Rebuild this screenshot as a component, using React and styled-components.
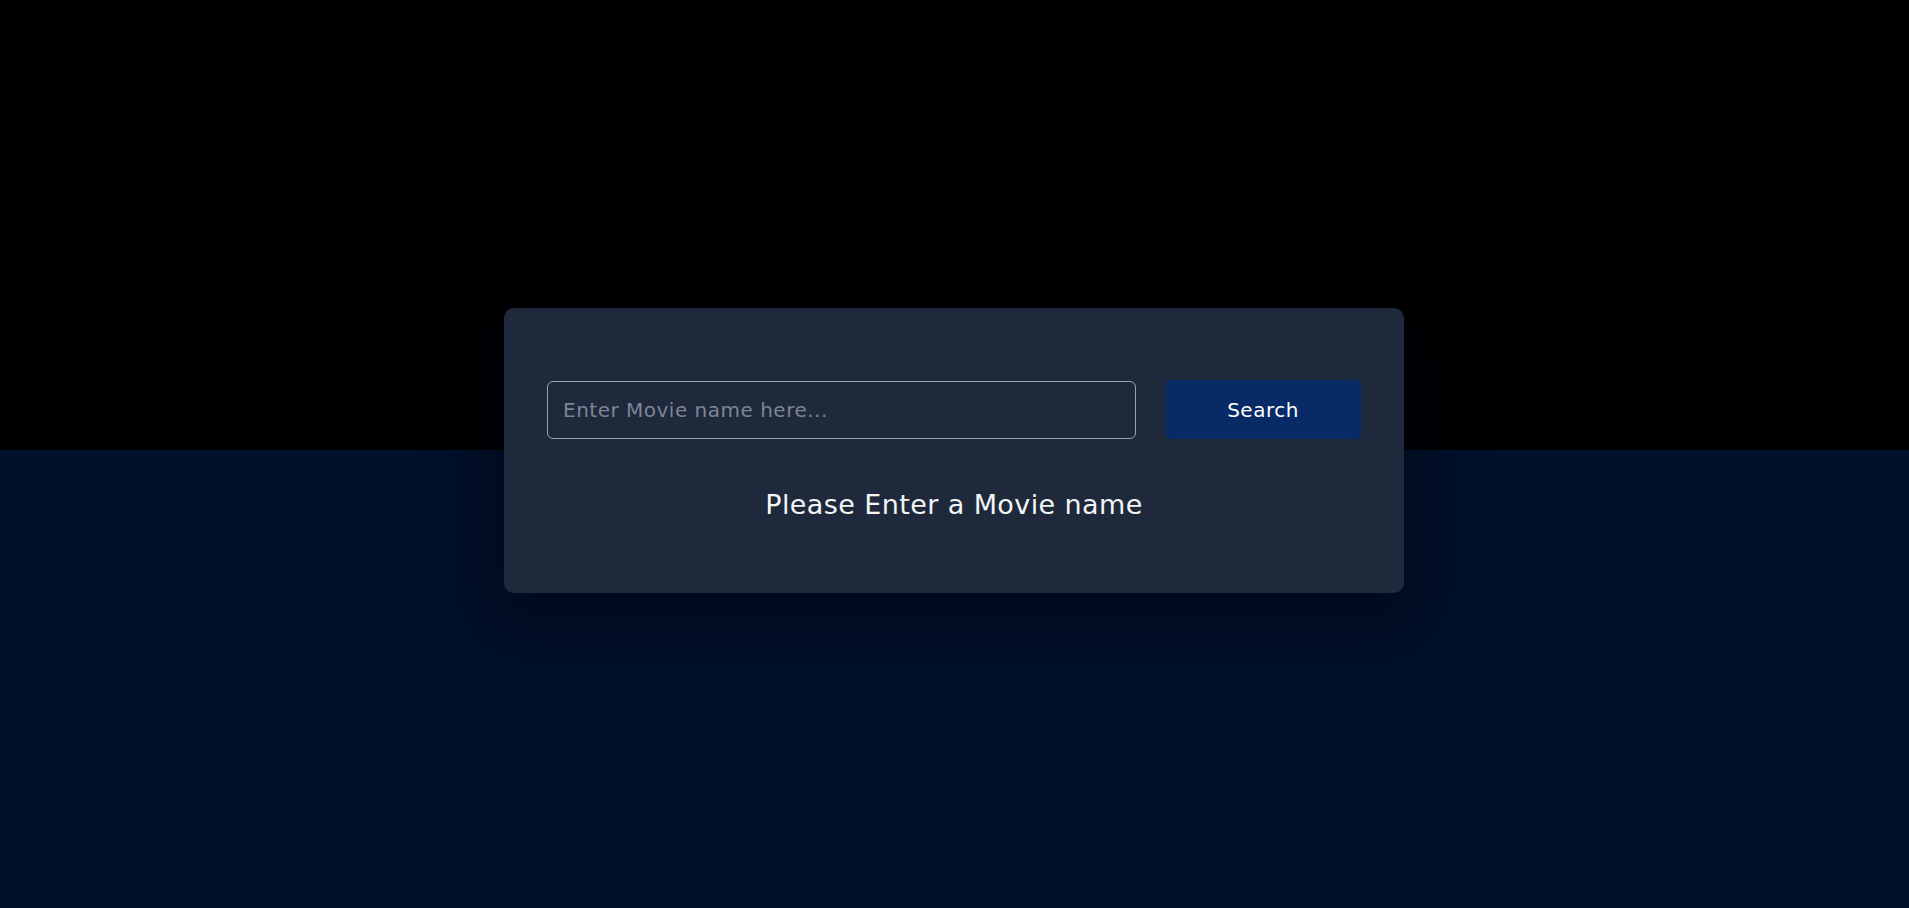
import React, { useState } from 'react'
import styled, { createGlobalStyle } from 'styled-components'

const GlobalStyle = createGlobalStyle`
    *{
        box-sizing: border-box;
    }
    body{
        margin: 0;
        font-family: "DejaVu Sans", "Open Sans", sans-serif;
        background: #00112b;
    }
`

const App = () => {
    const [query, setQuery] = useState('')

    return (
        <Page>
            <GlobalStyle />
            <Card>
                <SearchRow>
                    <Input
                        type="text"
                        placeholder="Enter Movie name here..."
                        value={query}
                        onChange={(e) => setQuery(e.target.value)}
                    />
                    <Button>Search</Button>
                </SearchRow>
                <Message>Please Enter a Movie name</Message>
            </Card>
        </Page>
    )
}

const Page = styled.main`
    min-height: 100vh;
    background: linear-gradient(to bottom, #000000 0, #000000 450px, #00112b 450px);
    display: flex;
    justify-content: center;
    padding-top: 308px;
`

const Card = styled.section`
    width: 900px;
    height: 285px;
    margin-right: 1px;
    background: #1e293b;
    border-radius: 10px;
    padding: 72px 43px 0;
    box-shadow: 0 20px 60px 20px rgba(0, 4, 18, 0.5);
    display: flex;
    flex-direction: column;
`

const SearchRow = styled.div`
    display: flex;
    align-items: center;
    gap: 29px;
`

const Input = styled.input`
    flex: 1;
    height: 58px;
    background: transparent;
    border: 1px solid #9aa5b4;
    border-radius: 6px;
    padding: 0 15px;
    font-family: inherit;
    font-size: 20px;
    letter-spacing: 0.5px;
    color: #e5e7eb;
    outline: none;
    &::placeholder{
        color: #7d8594;
    }
`

const Button = styled.button`
    width: 196px;
    height: 59px;
    background: #082a66;
    border: none;
    border-radius: 6px;
    color: #ffffff;
    font-family: inherit;
    font-size: 20px;
    letter-spacing: 0.5px;
    cursor: pointer;
`

const Message = styled.h2`
    margin: 50px 0 0;
    text-align: center;
    font-size: 27px;
    letter-spacing: 0.4px;
    font-weight: 400;
    color: #f3f4f6;
`

export default App
